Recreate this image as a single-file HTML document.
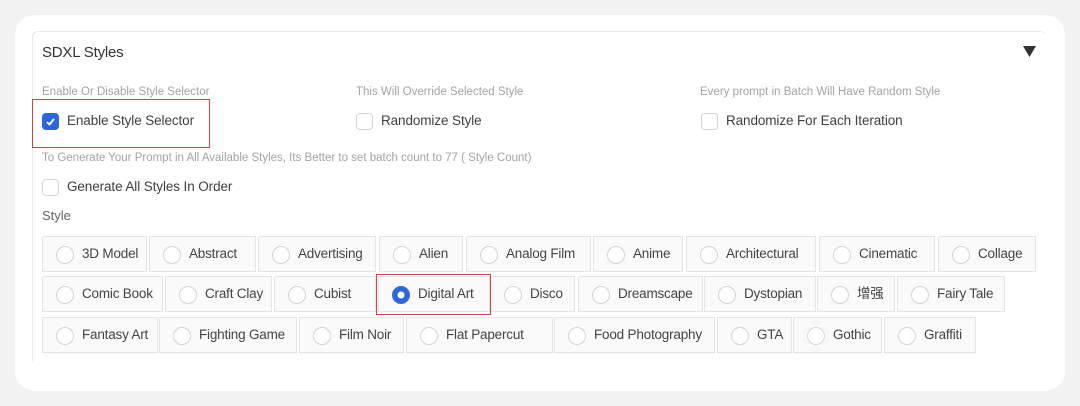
<!DOCTYPE html><html><head><meta charset="utf-8"><style>
*{box-sizing:border-box;margin:0;padding:0}
body{width:1080px;height:406px;background:#f2f2f2;position:relative;overflow:hidden;font-family:"Liberation Sans","Noto Sans CJK SC",sans-serif;color:#444}
.card{position:absolute;left:15px;top:15px;width:1050px;height:376px;background:#fff;border-radius:20px}
.panel{position:absolute;left:32px;top:31px;width:1014px;height:330px;border:1px solid #e8e8e8;border-bottom:none;border-right:none;border-radius:6px 6px 0 0}
.a{position:absolute;white-space:nowrap}
.t{font-size:15px;color:#333;letter-spacing:-0.2px}
.s{font-size:11.5px;color:#a3a3a3}
.l{font-size:13.5px;color:#3f3f3f;letter-spacing:-0.1px}
.cb{position:absolute;width:17px;height:17px;border:1px solid #d4d4d4;border-radius:4px;background:#fff}
.cb.on{background:#2f66d6;border-color:#2f66d6}
.b{position:absolute;height:36px;border:1px solid #e4e4e4;background:#fafafa;font-size:13.5px;letter-spacing:-0.2px;color:#444;line-height:34px;padding-left:39px;white-space:nowrap}
.b::before{content:"";position:absolute;left:13px;top:9px;width:16px;height:16px;border:1px solid #d4d4d4;border-radius:50%;background:#fff}
.b.on::before{background:#2f66d6;border-color:#2f66d6;box-shadow:inset 0 0 0 4.5px #2f66d6,inset 0 0 0 8px #fff}
.red{position:absolute;border:1.5px solid #d04444}
</style></head><body>
<div class="card"></div>
<div class="panel"></div>
<div class="a t" style="left:42px;top:44px">SDXL Styles</div>
<svg class="a" style="left:1023px;top:46px" width="13" height="11"><path d="M0 0H13L6.5 11Z" fill="#333"/></svg>
<div class="a s" style="left:42px;top:86px">Enable Or Disable Style Selector</div>
<div class="a s" style="left:356px;top:86px">This Will Override Selected Style</div>
<div class="a s" style="left:700px;top:86px">Every prompt in Batch Will Have Random Style</div>
<div class="cb on" style="left:42px;top:113px"><svg width="15" height="15" style="position:absolute;left:0;top:0"><path d="M4 8L6.5 10.5L11 5" stroke="#fff" stroke-width="1.8" fill="none"/></svg></div>
<div class="a l" style="left:67px;top:113px">Enable Style Selector</div>
<div class="cb" style="left:356px;top:113px"></div>
<div class="a l" style="left:381px;top:113px">Randomize Style</div>
<div class="cb" style="left:701px;top:113px"></div>
<div class="a l" style="left:726px;top:113px">Randomize For Each Iteration</div>
<div class="red" style="left:32px;top:99px;width:178px;height:49px"></div>
<div class="a s" style="left:42px;top:152px">To Generate Your Prompt in All Available Styles, Its Better to set batch count to 77 ( Style Count)</div>
<div class="cb" style="left:42px;top:179px"></div>
<div class="a l" style="left:67px;top:179px">Generate All Styles In Order</div>
<div class="a" style="left:42px;top:208px;font-size:13px;color:#666">Style</div>

<div class="b" style="left:42px;top:236px;width:105px">3D Model</div>
<div class="b" style="left:149px;top:236px;width:107px">Abstract</div>
<div class="b" style="left:258px;top:236px;width:118px">Advertising</div>
<div class="b" style="left:379px;top:236px;width:84px">Alien</div>
<div class="b" style="left:466px;top:236px;width:125px">Analog Film</div>
<div class="b" style="left:593px;top:236px;width:90px">Anime</div>
<div class="b" style="left:686px;top:236px;width:130px">Architectural</div>
<div class="b" style="left:819px;top:236px;width:116px">Cinematic</div>
<div class="b" style="left:938px;top:236px;width:98px">Collage</div>

<div class="b" style="left:42px;top:276px;width:121px">Comic Book</div>
<div class="b" style="left:165px;top:276px;width:107px">Craft Clay</div>
<div class="b" style="left:274px;top:276px;width:102px">Cubist</div>
<div class="b on" style="left:378px;top:276px;width:112px">Digital Art</div>
<div class="b" style="left:490px;top:276px;width:85px">Disco</div>
<div class="b" style="left:578px;top:276px;width:125px">Dreamscape</div>
<div class="b" style="left:704px;top:276px;width:112px">Dystopian</div>
<div class="b" style="left:817px;top:276px;width:78px">增强</div>
<div class="b" style="left:897px;top:276px;width:108px">Fairy Tale</div>
<div class="red" style="left:376px;top:274px;width:115px;height:41px"></div>

<div class="b" style="left:42px;top:317px;width:116px">Fantasy Art</div>
<div class="b" style="left:159px;top:317px;width:138px">Fighting Game</div>
<div class="b" style="left:299px;top:317px;width:105px">Film Noir</div>
<div class="b" style="left:406px;top:317px;width:147px">Flat Papercut</div>
<div class="b" style="left:554px;top:317px;width:161px">Food Photography</div>
<div class="b" style="left:717px;top:317px;width:75px">GTA</div>
<div class="b" style="left:793px;top:317px;width:89px">Gothic</div>
<div class="b" style="left:884px;top:317px;width:92px">Graffiti</div>
</body></html>
